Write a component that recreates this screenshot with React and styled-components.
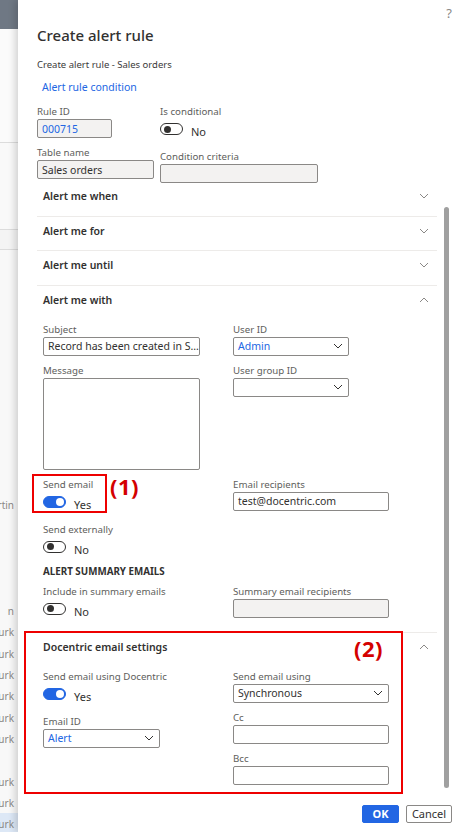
import React from 'react';
import styled, { createGlobalStyle } from 'styled-components';

const GlobalStyle = createGlobalStyle`
  html, body {
    margin: 0;
    padding: 0;
    background: #fff;
  }
  body {
    font-family: "Noto Sans", "Open Sans", sans-serif;
    color: #323130;
  }
  * {
    box-sizing: border-box;
  }
`;

const Page = styled.div`
  display: flex;
  width: 462px;
  height: 832px;
  overflow: hidden;
`;

/* the page behind the dialog, only a sliver is visible */
const BackPage = styled.div`
  width: 18px;
  flex-shrink: 0;
  display: flex;
  flex-direction: column;
  background: #f8f8f8;
  overflow: hidden;
`;

const BackBand = styled.div`
  flex-shrink: 0;
  height: ${(p) => p.$h}px;
  background: ${(p) => p.$bg};
  border-bottom: ${(p) => (p.$line ? '1px solid #dcdcdc' : 'none')};
`;

const BackRow = styled.div`
  flex-shrink: 0;
  height: 21.3px;
  display: flex;
  align-items: center;
  justify-content: flex-end;
  padding-right: 4px;
  font-size: 10px;
  color: #8a8886;
  white-space: nowrap;
  background: ${(p) => (p.$selected ? '#dde8f6' : 'transparent')};
`;

const Dialog = styled.div`
  flex: 1;
  position: relative;
  z-index: 1;
  display: flex;
  flex-direction: column;
  padding: 0 10px 0 19px;
  background: #fff;
  box-shadow: -3px 0 7px rgba(0, 0, 0, 0.16);
`;

const TopBar = styled.div`
  height: 25px;
  display: flex;
  align-items: center;
  justify-content: flex-end;
  font-size: 13px;
  color: #8a8886;
`;

const Title = styled.h1`
  margin: 0;
  font-size: 15px;
  font-weight: 500;
  line-height: 20px;
  color: #323130;
`;

const Caption = styled.div`
  margin-top: 12px;
  font-size: 9.5px;
  line-height: 16px;
  color: #3b3a39;
`;

const LinkText = styled.div`
  margin-top: 6px;
  padding-left: 5px;
  font-size: 10.5px;
  line-height: 16px;
  color: #2266e3;
`;

const HeadGrid = styled.div`
  display: grid;
  grid-template-columns: 123px 158px;
  row-gap: 3px;
  margin-top: 9px;
`;

const Field = styled.div`
  position: relative;
  display: flex;
  flex-direction: column;
  margin-top: ${(p) => p.$shift || 0}px;
`;

const Label = styled.div`
  font-size: 9.7px;
  line-height: 15px;
  color: #605e5c;
  white-space: nowrap;
`;

const Box = styled.div`
  width: ${(p) => p.$w}px;
  height: ${(p) => p.$h || 19}px;
  display: flex;
  align-items: ${(p) => (p.$multi ? 'flex-start' : 'center')};
  justify-content: space-between;
  padding: 0 5px 0 4px;
  border: 1px solid #8a8886;
  border-radius: 2px;
  background: ${(p) => (p.$readOnly ? '#f3f2f1' : '#fff')};
  color: ${(p) => (p.$link ? '#2266e3' : '#323130')};
  font-size: 10.5px;
  white-space: nowrap;
  overflow: hidden;
`;

const ToggleRow = styled.div`
  height: 23px;
  display: flex;
  align-items: flex-start;
  gap: 8px;
`;

const Switch = styled.span`
  position: relative;
  flex-shrink: 0;
  width: 23px;
  height: 12px;
  margin-top: 4px;
  border-radius: 6px;
  border: 1px solid ${(p) => (p.$on ? '#2266e3' : '#323130')};
  background: ${(p) => (p.$on ? '#2266e3' : '#fff')};

  &::after {
    content: '';
    position: absolute;
    top: ${(p) => (p.$on ? 1 : 1.5)}px;
    left: ${(p) => (p.$on ? 12 : 3)}px;
    width: ${(p) => (p.$on ? 8 : 7)}px;
    height: ${(p) => (p.$on ? 8 : 7)}px;
    border-radius: 50%;
    background: ${(p) => (p.$on ? '#fff' : '#323130')};
  }
`;

const ToggleText = styled.span`
  margin-top: 6px;
  font-size: 11px;
  line-height: 14px;
  color: #323130;
`;

const Body = styled.div`
  display: flex;
`;

const Sections = styled.div`
  flex: 0 0 400px;
`;

const ScrollTrack = styled.div`
  margin-left: auto;
  margin-right: 3px;
  width: 5px;
  padding-top: 24px;
`;

const ScrollThumb = styled.div`
  height: 581px;
  border-radius: 3px;
  background: #a0a0a0;
`;

const Section = styled.div`
  position: relative;
  padding-bottom: ${(p) => (p.$open ? p.$pad ?? 10 : 0)}px;
  border-bottom: ${(p) => (p.$last ? 'none' : '1px solid #edebe9')};
`;

const SectionHeader = styled.div`
  display: flex;
  align-items: center;
  justify-content: space-between;
  padding: ${(p) => (p.$first ? 5 : 6)}px 8px ${(p) => (p.$open ? 14 : 11.5)}px 6px;
  font-size: 10.5px;
  font-weight: 600;
  line-height: 16px;
  color: #323130;
`;

const SectionBody = styled.div`
  display: flex;
  flex-direction: column;
  gap: 7px;
  padding-left: 6px;
`;

const Row = styled.div`
  display: grid;
  grid-template-columns: 157px 156px;
  column-gap: 33px;
  align-items: start;
`;

const Column = styled.div`
  display: flex;
  flex-direction: column;
  gap: 7px;
`;

const GroupTitle = styled.div`
  margin: -2px 0 -2px;
  font-size: 9.8px;
  font-weight: 700;
  line-height: 14px;
  color: #323130;
`;

const Footer = styled.div`
  display: flex;
  justify-content: flex-end;
  gap: 7px;
  margin-top: 11px;
`;

const Button = styled.button`
  height: 18px;
  width: ${(p) => p.$w}px;
  padding: 0;
  border-radius: 2px;
  border: 1px solid ${(p) => (p.$primary ? '#2266e3' : '#8a8886')};
  background: ${(p) => (p.$primary ? '#2266e3' : '#fff')};
  color: ${(p) => (p.$primary ? '#fff' : '#323130')};
  font-family: inherit;
  font-size: 11px;
  font-weight: ${(p) => (p.$primary ? 700 : 400)};
  line-height: 16px;
`;

/* red annotation marks drawn over the screenshot */
const FieldMark = styled.div`
  position: absolute;
  left: -11px;
  top: -3px;
  width: 75px;
  height: 39px;
  border: 2px solid #ee0000;
  pointer-events: none;
`;

const SectionMark = styled.div`
  position: absolute;
  left: -13px;
  top: -2px;
  width: 379px;
  bottom: 0;
  border: 2px solid #ee0000;
  pointer-events: none;
`;

const MarkNumber = styled.span`
  position: absolute;
  left: ${(p) => p.$x}px;
  top: ${(p) => p.$y}px;
  font-family: "Open Sans", "Noto Sans", sans-serif;
  font-size: 22px;
  font-weight: 700;
  line-height: 26px;
  letter-spacing: 0.5px;
  color: #d40000;
  white-space: nowrap;
`;

const Chevron = ({ up }) => (
  <svg width="10" height="6" viewBox="0 0 10 6" fill="none">
    <polyline
      points={up ? '1,5 5,1 9,5' : '1,1 5,5 9,1'}
      stroke="#8a8886"
      strokeWidth="1"
    />
  </svg>
);

const SelectChevron = () => (
  <svg width="10" height="6" viewBox="0 0 10 6" fill="none">
    <polyline points="1,1 5,5 9,1" stroke="#323130" strokeWidth="1" />
  </svg>
);

const TextField = ({ label, w, h, value, link, readOnly, multi, select, shift }) => (
  <Field $shift={shift}>
    <Label>{label}</Label>
    <Box $w={w} $h={h} $link={link} $readOnly={readOnly} $multi={multi}>
      <span>{value}</span>
      {select && <SelectChevron />}
    </Box>
  </Field>
);

const ToggleField = ({ label, on, children }) => (
  <Field>
    <Label>{label}</Label>
    <ToggleRow>
      <Switch $on={on} />
      <ToggleText>{on ? 'Yes' : 'No'}</ToggleText>
    </ToggleRow>
    {children}
  </Field>
);

const backRows = ['rtin', '', '', '', '', 'n', 'urk', 'urk', 'urk', 'urk', 'urk', 'urk', '', 'urk', 'urk', 'urk'];

export default function App() {
  return (
    <Page>
      <GlobalStyle />
      <BackPage>
        <BackBand $h={29} $bg="#6f7884" />
        <BackBand $h={114} $bg="#fbfbfb" $line />
        <BackBand $h={87} $bg="#f9f9f9" $line />
        <BackBand $h={20} $bg="#f4f4f4" $line />
        <BackBand $h={244} $bg="#f8f8f8" />
        {backRows.map((t, i) => (
          <BackRow key={i} $selected={i === backRows.length - 1}>
            {t}
          </BackRow>
        ))}
      </BackPage>

      <Dialog>
        <TopBar>?</TopBar>
        <Title>Create alert rule</Title>
        <Caption>Create alert rule - Sales orders</Caption>
        <LinkText>Alert rule condition</LinkText>

        <HeadGrid>
          <TextField label="Rule ID" w={75} value="000715" link readOnly />
          <ToggleField label="Is conditional" on={false} />
          <TextField label="Table name" w={117} value="Sales orders" readOnly />
          <TextField label="Condition criteria" w={158} value="" readOnly shift={4} />
        </HeadGrid>

        <Body>
          <Sections>
            <Section>
              <SectionHeader $first>
                Alert me when
                <Chevron />
              </SectionHeader>
            </Section>
            <Section>
              <SectionHeader>
                Alert me for
                <Chevron />
              </SectionHeader>
            </Section>
            <Section>
              <SectionHeader>
                Alert me until
                <Chevron />
              </SectionHeader>
            </Section>

            <Section $open>
              <SectionHeader $open>
                Alert me with
                <Chevron up />
              </SectionHeader>
              <SectionBody>
                <Row>
                  <TextField label="Subject" w={157} value="Record has been created in S..." />
                  <TextField label="User ID" w={116} value="Admin" link select />
                </Row>
                <Row>
                  <TextField label="Message" w={157} h={92} value="" multi />
                  <TextField label="User group ID" w={116} value="" select />
                </Row>
                <Row>
                  <ToggleField label="Send email" on>
                    <FieldMark />
                    <MarkNumber $x={67} $y={-4}>(1)</MarkNumber>
                  </ToggleField>
                  <TextField label="Email recipients" w={156} value="test@docentric.com" />
                </Row>
                <Row>
                  <ToggleField label="Send externally" on={false} />
                </Row>
                <GroupTitle>ALERT SUMMARY EMAILS</GroupTitle>
                <Row>
                  <ToggleField label="Include in summary emails" on={false} />
                  <TextField label="Summary email recipients" w={156} value="" readOnly />
                </Row>
              </SectionBody>
            </Section>

            <Section $open $last $pad={9}>
              <SectionMark>
                <MarkNumber $x={328} $y={2}>(2)</MarkNumber>
              </SectionMark>
              <SectionHeader $open>
                Docentric email settings
                <Chevron up />
              </SectionHeader>
              <SectionBody>
                <Row>
                  <Column>
                    <ToggleField label="Send email using Docentric" on />
                    <TextField label="Email ID" w={117} value="Alert" link select />
                  </Column>
                  <Column>
                    <TextField label="Send email using" w={156} value="Synchronous" select />
                    <TextField label="Cc" w={156} value="" />
                    <TextField label="Bcc" w={156} value="" />
                  </Column>
                </Row>
              </SectionBody>
            </Section>
          </Sections>
          <ScrollTrack>
            <ScrollThumb />
          </ScrollTrack>
        </Body>

        <Footer>
          <Button $primary $w={37}>OK</Button>
          <Button $w={46}>Cancel</Button>
        </Footer>
      </Dialog>
    </Page>
  );
}
